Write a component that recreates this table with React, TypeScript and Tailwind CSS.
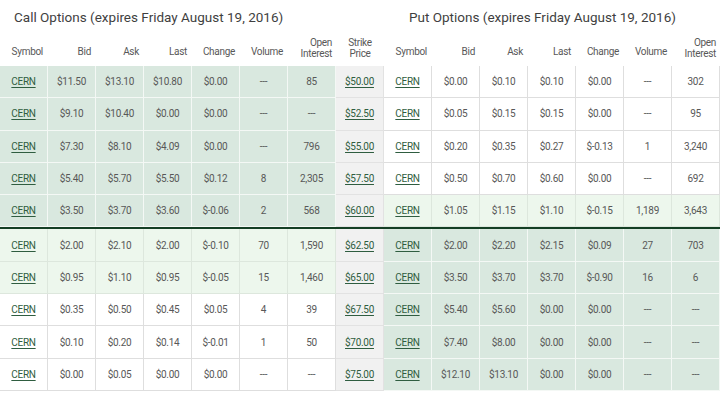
import React from "react";

type Tone = "itm" | "near" | "out";

const calls: string[][] = [
  ["$11.50", "$13.10", "$10.80", "$0.00", "---", "85", "$50.00"],
  ["$9.10", "$10.40", "$0.00", "$0.00", "---", "---", "$52.50"],
  ["$7.30", "$8.10", "$4.09", "$0.00", "---", "796", "$55.00"],
  ["$5.40", "$5.70", "$5.50", "$0.12", "8", "2,305", "$57.50"],
  ["$3.50", "$3.70", "$3.60", "$-0.06", "2", "568", "$60.00"],
  ["$2.00", "$2.10", "$2.00", "$-0.10", "70", "1,590", "$62.50"],
  ["$0.95", "$1.10", "$0.95", "$-0.05", "15", "1,460", "$65.00"],
  ["$0.35", "$0.50", "$0.45", "$0.05", "4", "39", "$67.50"],
  ["$0.10", "$0.20", "$0.14", "$-0.01", "1", "50", "$70.00"],
  ["$0.00", "$0.05", "$0.00", "$0.00", "---", "---", "$75.00"],
];

const puts: string[][] = [
  ["$0.00", "$0.10", "$0.10", "$0.00", "---", "302"],
  ["$0.05", "$0.15", "$0.15", "$0.00", "---", "95"],
  ["$0.20", "$0.35", "$0.27", "$-0.13", "1", "3,240"],
  ["$0.50", "$0.70", "$0.60", "$0.00", "---", "692"],
  ["$1.05", "$1.15", "$1.10", "$-0.15", "1,189", "3,643"],
  ["$2.00", "$2.20", "$2.15", "$0.09", "27", "703"],
  ["$3.50", "$3.70", "$3.70", "$-0.90", "16", "6"],
  ["$5.40", "$5.60", "$0.00", "$0.00", "---", "---"],
  ["$7.40", "$8.00", "$0.00", "$0.00", "---", "---"],
  ["$12.10", "$13.10", "$0.00", "$0.00", "---", "---"],
];

// in the money / near the money / out of the money
const callTone: Tone[] = ["itm", "itm", "itm", "itm", "itm", "near", "near", "out", "out", "out"];
const putTone: Tone[] = ["out", "out", "out", "out", "near", "itm", "itm", "itm", "itm", "itm"];

const toneCls: Record<Tone, string> = {
  itm: "bg-[#d9e8df] border-[#f4f8f5]",
  near: "bg-[#edf7ed] border-[#dde7dd]",
  out: "bg-white border-[#dedede]",
};

const headers = ["Symbol", "Bid", "Ask", "Last", "Change", "Volume"];

function Cell({ tone, children }: { tone: Tone; children: React.ReactNode }) {
  return (
    <div className={`flex items-center justify-center border-r border-b ${toneCls[tone]}`}>{children}</div>
  );
}

function Link({ children }: { children: React.ReactNode }) {
  return <span className="text-[#2f5d40] underline underline-offset-2">{children}</span>;
}

function HeadCells() {
  return (
    <>
      {headers.map((h) => (
        <div key={h} className="flex items-end justify-end pr-[5px] pb-[7px]">
          {h}
        </div>
      ))}
      <div className="flex flex-col items-end justify-end pr-[4px] pb-[7px] leading-[11px]">
        <span>Open</span>
        <span>Interest</span>
      </div>
    </>
  );
}

export default function App() {
  return (
    <div
      className="w-[720px] h-[393px] overflow-hidden bg-white text-[10px] tracking-[-0.3px] text-[#585858]"
      style={{ fontFamily: "Roboto, 'Liberation Sans', sans-serif" }}
    >
      <div className="flex h-[35px] items-center whitespace-nowrap text-[13.5px] tracking-normal text-[#3f3f3f]">
        <span className="pl-[14px] w-[409px]">Call Options (expires Friday August 19, 2016)</span>
        <span>Put Options (expires Friday August 19, 2016)</span>
      </div>

      <div className="grid h-[31px] grid-cols-[repeat(15,48px)]">
        <HeadCells />
        <div className="flex flex-col items-center justify-end pb-[7px] leading-[11px]">
          <span>Strike</span>
          <span>Price</span>
        </div>
        <HeadCells />
      </div>

      {calls.map((c, i) => (
        <React.Fragment key={c[6]}>
          <div className="grid h-[32.3px] grid-cols-[repeat(15,48px)]">
            <Cell tone={callTone[i]}>
              <Link>CERN</Link>
            </Cell>
            {c.slice(0, 6).map((v, j) => (
              <Cell key={j} tone={callTone[i]}>
                {v}
              </Cell>
            ))}
            <div className="flex items-center justify-center border-r border-b border-[#e2e2e2] bg-[#f1f1f1]">
              <Link>{c[6]}</Link>
            </div>
            <Cell tone={putTone[i]}>
              <Link>CERN</Link>
            </Cell>
            {puts[i].map((v, j) => (
              <Cell key={j} tone={putTone[i]}>
                {v}
              </Cell>
            ))}
          </div>
          {i === 4 && <div className="h-[2px] bg-[#143f24]" />}
        </React.Fragment>
      ))}
    </div>
  );
}
